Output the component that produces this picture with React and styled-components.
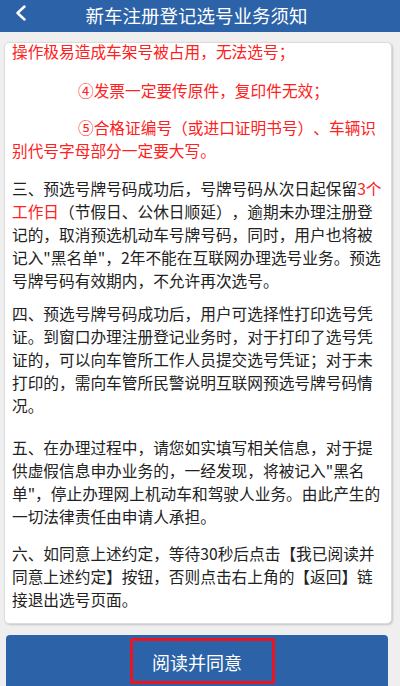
import React from "react";
import styled, { createGlobalStyle } from "styled-components";

const GlobalStyle = createGlobalStyle`
  html, body {
    margin: 0;
    padding: 0;
    background: #efefef;
  }
  body {
    font-family: "Noto Sans CJK SC", "Noto Sans", sans-serif;
    text-spacing-trim: space-all;
  }
  #root {
    height: 686px;
    overflow: hidden;
  }
`;

const Page = styled.div`
  display: flex;
  flex-direction: column;
  height: 686px;
  background: #efefef;
`;

const Header = styled.header`
  flex: 0 0 32px;
  display: flex;
  align-items: center;
  justify-content: center;
  position: relative;
  background: #2b62a8;
  padding-bottom: 3px;
  box-sizing: border-box;
`;

const BackButton = styled.button`
  position: absolute;
  left: 15px;
  top: 5px;
  width: 12px;
  height: 16px;
  padding: 0;
  border: none;
  background: none;
  display: flex;
`;

const Title = styled.h1`
  margin: 0 7px 0 0;
  color: #fff;
  font-size: 18.5px;
  font-weight: 400;
  line-height: 24px;
`;

const Card = styled.section`
  flex: 0 0 582px;
  margin: 10px 8px 0 4px;
  background: #fff;
  border: 1px solid #dcdcdc;
  border-radius: 5px;
  box-shadow: 1px 1px 2px rgba(0, 0, 0, 0.18);
  box-sizing: border-box;
  overflow: hidden;
  padding: 0 7px;
`;

const Content = styled.div`
  margin-top: -3px;
`;

const Para = styled.p`
  margin: ${(p) => p.$top}px 0 0;
  font-size: 15.7px;
  line-height: 23px;
  color: ${(p) => (p.$red ? "#ff2020" : "#222")};
  text-indent: ${(p) => (p.$indent ? "66px" : "0")};
  text-spacing-trim: space-all;
  font-kerning: none;
`;

const Red = styled.span`
  color: #ff2020;
`;

const AgreeButton = styled.button`
  flex: 0 0 54px;
  position: relative;
  margin: 11px 12px 0 6px;
  border: none;
  border-radius: 4px;
  background: #2c62a8;
  color: #fff;
  font-family: "Noto Sans CJK SC", "Noto Sans", sans-serif;
  font-size: 18px;
  padding: 0;
`;

const Highlight = styled.span`
  position: absolute;
  left: 124px;
  top: 3px;
  width: 145px;
  height: 46px;
  border: 3px solid #ea1520;
  border-radius: 2px;
  box-sizing: border-box;
  pointer-events: none;
`;

const paragraphs = [
  {
    id: 1,
    top: 0,
    red: true,
    text: "操作极易造成车架号被占用，无法选号；",
  },
  {
    id: 2,
    top: 15.5,
    red: true,
    indent: true,
    text: "④发票一定要传原件，复印件无效；",
  },
  {
    id: 3,
    top: 14,
    red: true,
    indent: true,
    text: "⑤合格证编号（或进口证明书号）、车辆识别代号字母部分一定要大写。",
  },
  {
    id: 4,
    top: 15,
    text: (
      <>
        三、预选号牌号码成功后，号牌号码从次日起保留
        <Red>3个工作日</Red>
        （节假日、公休日顺延），逾期未办理注册登记的，取消预选机动车号牌号码，同时，用户也将被记入"黑名单"，2年不能在互联网办理选号业务。预选号牌号码有效期内，不允许再次选号。
      </>
    ),
  },
  {
    id: 5,
    top: 10,
    text: "四、预选号牌号码成功后，用户可选择性打印选号凭证。到窗口办理注册登记业务时，对于打印了选号凭证的，可以向车管所工作人员提交选号凭证；对于未打印的，需向车管所民警说明互联网预选号牌号码情况。",
  },
  {
    id: 6,
    top: 19,
    text: '五、在办理过程中，请您如实填写相关信息，对于提供虚假信息申办业务的，一经发现，将被记入"黑名单"，停止办理网上机动车和驾驶人业务。由此产生的一切法律责任由申请人承担。',
  },
  {
    id: 7,
    top: 14,
    text: "六、如同意上述约定，等待30秒后点击【我已阅读并同意上述约定】按钮，否则点击右上角的【返回】链接退出选号页面。",
  },
];

const App = () => {
  return (
    <Page>
      <GlobalStyle />
      <Header>
        <BackButton aria-label="返回">
          <svg width="12" height="16" viewBox="0 0 12 16">
            <polyline
              points="9.5,1.5 2.5,8 9.5,14.5"
              fill="none"
              stroke="#fff"
              strokeWidth="2.4"
              strokeLinecap="round"
              strokeLinejoin="round"
            />
          </svg>
        </BackButton>
        <Title>新车注册登记选号业务须知</Title>
      </Header>

      <Card>
        <Content>
          {paragraphs.map((p) => (
            <Para key={p.id} $top={p.top} $red={p.red} $indent={p.indent}>
              {p.text}
            </Para>
          ))}
        </Content>
      </Card>

      <AgreeButton>
        阅读并同意
        <Highlight />
      </AgreeButton>
    </Page>
  );
};

export default App;
